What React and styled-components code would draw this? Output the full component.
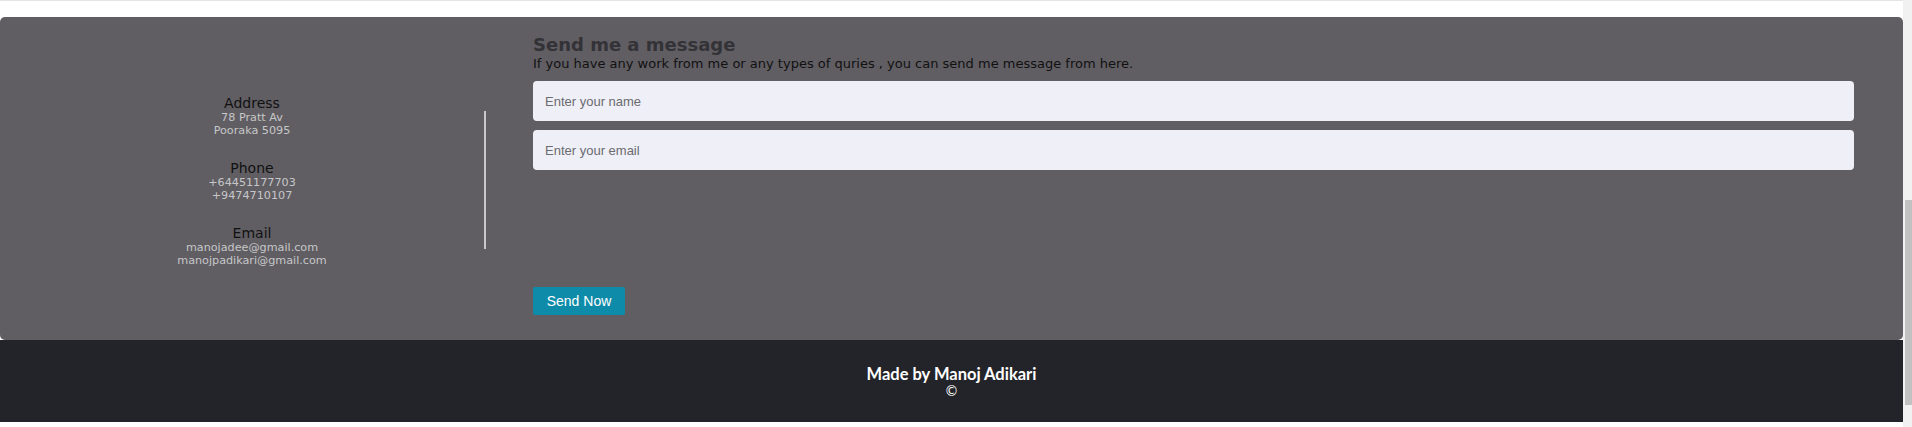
import React from 'react'
import styled, { createGlobalStyle } from 'styled-components'

const GlobalStyle = createGlobalStyle`
  * { box-sizing: border-box; }
  html, body {
    margin: 0;
    padding: 0;
    background: #fff;
    font-family: "DejaVu Sans", Verdana, sans-serif;
    overflow: hidden;
  }
`

const Page = styled.div`
  display: flex;
  width: 1912px;
  height: 427px;
`

const Main = styled.div`
  flex: 1;
  display: flex;
  flex-direction: column;
`

const TopStrip = styled.div`
  height: 17px;
  border-top: 1px solid #e6e6e6;
`

const Card = styled.section`
  display: flex;
  height: 323px;
  background-color: #605e63;
  border-radius: 5px;
`

const ContactCol = styled.div`
  width: 484px;
  padding: 4px 0 0 20px;
  display: flex;
  flex-direction: column;
  align-items: center;
  justify-content: center;
  gap: 23px;
`

const ContactItem = styled.div`
  text-align: center;
  h4 {
    margin: 0;
    font-size: 14px;
    line-height: 16px;
    font-weight: 400;
    color: #111;
  }
  p {
    margin: 0;
    font-size: 11.2px;
    line-height: 13px;
    color: #c6c6c8;
  }
`

const Divider = styled.div`
  align-self: center;
  width: 2px;
  height: 138px;
  margin-top: 2px;
  background-color: #c9c8cc;
`

const FormCol = styled.form`
  flex: 1;
  display: flex;
  flex-direction: column;
  align-items: flex-start;
  padding: 17px 49px 25px 47px;
`

const Title = styled.h2`
  margin: 0;
  font-size: 18px;
  line-height: 22px;
  font-weight: 700;
  color: #333236;
`

const Subtitle = styled.p`
  margin: 0 0 10px;
  font-size: 13px;
  line-height: 15px;
  color: #111;
`

const Input = styled.input`
  width: 100%;
  height: 40px;
  margin-bottom: ${props => props.last ? '117px' : '9px'};
  padding: 0 12px;
  border: none;
  border-radius: 4px;
  background-color: #efeff7;
  font-family: "Liberation Sans", Arial, sans-serif;
  font-size: 13px;
  color: #333;
  outline: none;
  &::placeholder {
    color: #6b6b70;
  }
`

const SendButton = styled.button`
  width: 92px;
  height: 28px;
  padding: 0;
  border: none;
  border-radius: 2px;
  background-color: #0e8ba9;
  color: #fff;
  font-family: "Liberation Sans", Arial, sans-serif;
  font-size: 14px;
  cursor: pointer;
`

const Footer = styled.footer`
  height: 82px;
  background-color: #232429;
  color: #fff;
  display: flex;
  flex-direction: column;
  align-items: center;
  justify-content: center;
  padding-top: 2px;
  h5 {
    margin: 0;
    font-family: Lato, "Open Sans", sans-serif;
    font-size: 16.5px;
    line-height: 18px;
    font-weight: 700;
  }
  span {
    margin-top: 1px;
    font-size: 14px;
    line-height: 15px;
  }
`

const Scrollbar = styled.div`
  width: 9px;
  display: flex;
  flex-direction: column;
  background-color: #f1f1f1;
`

const Track = styled.div`
  flex: 1;
  display: flex;
  flex-direction: column;
  justify-content: flex-end;
  padding: 0 0 22px 2px;
`

const Thumb = styled.div`
  height: 205px;
  background-color: #c1c1c1;
`

const contacts = [
  { title: 'Address', lines: ['78 Pratt Av', 'Pooraka 5095'] },
  { title: 'Phone', lines: ['+64451177703', '+9474710107'] },
  { title: 'Email', lines: ['manojadee@gmail.com', 'manojpadikari@gmail.com'] },
]

export default function App() {
  return (
    <Page>
      <GlobalStyle />
      <Main>
        <TopStrip />
        <Card>
          <ContactCol>
            {contacts.map(c => (
              <ContactItem key={c.title}>
                <h4>{c.title}</h4>
                {c.lines.map(l => <p key={l}>{l}</p>)}
              </ContactItem>
            ))}
          </ContactCol>
          <Divider />
          <FormCol onSubmit={e => e.preventDefault()}>
            <Title>Send me a message</Title>
            <Subtitle>
              If you have any work from me or any types of quries , you can send me message from here.
            </Subtitle>
            <Input type="text" placeholder="Enter your name" />
            <Input type="email" placeholder="Enter your email" last />
            <SendButton type="submit">Send Now</SendButton>
          </FormCol>
        </Card>
        <Footer>
          <h5>Made by Manoj Adikari</h5>
          <span>©</span>
        </Footer>
      </Main>
      <Scrollbar>
        <Track>
          <Thumb />
        </Track>
      </Scrollbar>
    </Page>
  )
}
